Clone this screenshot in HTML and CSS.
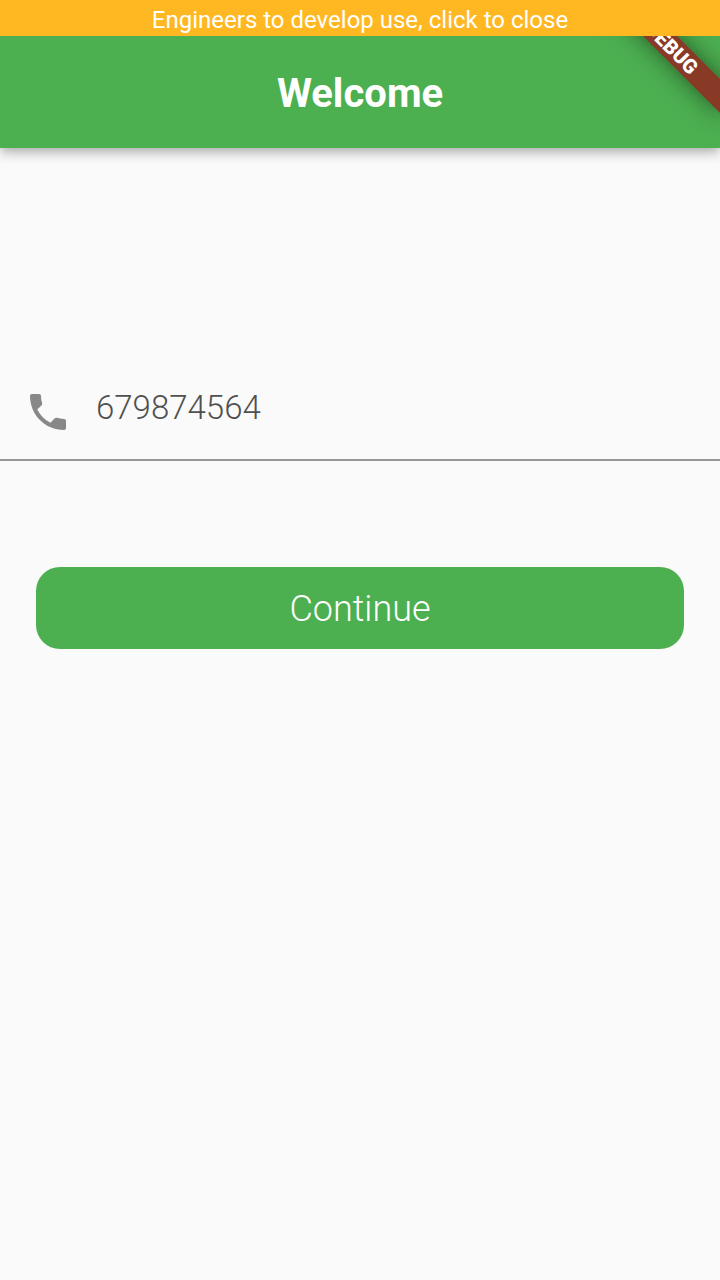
FILE: index.html
```html
<!DOCTYPE html>
<html lang="en">
<head>
<meta charset="utf-8">
<meta name="viewport" content="width=device-width, initial-scale=1">
<title>Welcome</title>
<link rel="stylesheet" href="styles.css">
</head>
<body>
<button class="notice" type="button">Engineers to develop use, click to close</button>
<header class="app-bar">
  <h1 class="title">Welcome</h1>
  <div class="ribbon-clip"><span class="ribbon">DEBUG</span></div>
</header>
<main>
  <form class="form">
    <div class="field">
      <label class="field-label" for="phone" aria-label="Phone number">
        <svg class="phone-icon" viewBox="0 0 24 24" aria-hidden="true"><path d="M20 15.5c-1.250 0-2.450-.2-3.570-.57-.35-.11-.74-.03-1.020.24l-2.200 2.200c-2.830-1.440-5.150-3.750-6.590-6.590l2.200-2.210c.28-.26.36-.65.25-1C8.700 6.450 8.500 5.250 8.500 4c0-.55-.45-1-1-1H4c-.55 0-1 .45-1 1 0 9.390 7.610 17 17 17 .55 0 1-.45 1-1v-3.500c0-.55-.45-1-1-1z"/></svg>
      </label>
      <input class="phone" id="phone" type="tel" value="679874564">
    </div>
    <button class="continue" type="button">Continue</button>
  </form>
</main>
</body>
</html>
```
FILE: styles.css
```css
* { box-sizing: border-box; }

body {
  margin: 0;
  min-height: 100vh;
  background: #fafafa;
  font-family: Roboto, "Liberation Sans", sans-serif;
}

button, input {
  border: 0;
  font-family: inherit;
}

.notice {
  display: block;
  width: 100%;
  height: 36px;
  padding: 4px 0 0;
  background: #ffb822;
  color: #fff;
  font-size: 24px;
  font-weight: 400;
  line-height: 32px;
}

.app-bar {
  position: relative;
  display: flex;
  align-items: center;
  justify-content: center;
  height: 112px;
  padding-top: 4px;
  background: #4caf50;
  box-shadow: 0 4px 8px -2px rgba(0, 0, 0, .16), 0 8px 10px rgba(0, 0, 0, .1), 0 2px 16px rgba(0, 0, 0, .1);
  clip-path: inset(0 0 -40px);
}

.title {
  margin: 0;
  color: #fff;
  font-size: 40px;
  font-weight: 700;
  line-height: 48px;
}

/* Diagonal build ribbon across the top right corner */
.ribbon-clip {
  position: absolute;
  inset: 0;
  overflow: hidden;
  pointer-events: none;
}

.ribbon {
  position: absolute;
  top: 0;
  right: -32px;
  width: 160px;
  height: 24px;
  background: #883a26;
  box-shadow: 0 0 24px rgba(0, 0, 0, .5);
  color: #fff;
  font-size: 20px;
  font-weight: 900;
  line-height: 24px;
  text-align: center;
  transform: rotate(45deg);
}

.form {
  display: flex;
  flex-direction: column;
  padding-top: 216px;
}

.field {
  display: flex;
  align-items: center;
  height: 97px;
  padding-left: 24px;
  border-bottom: 2px solid #979797;
}

.field-label {
  display: flex;
}

.phone-icon {
  width: 48px;
  height: 48px;
  fill: #888;
}

.phone {
  flex: 1;
  min-width: 0;
  margin-left: 24px;
  padding: 0 0 8px;
  background: transparent;
  color: #505050;
  font-size: 33px;
  font-weight: 300;
  line-height: 40px;
  outline: none;
}

.continue {
  height: 82px;
  margin: 106px 36px 0;
  padding: 2px 0 0;
  border-radius: 24px;
  background: #4caf50;
  color: #fff;
  font-size: 36px;
  font-weight: 300;
  line-height: 48px;
}
```
